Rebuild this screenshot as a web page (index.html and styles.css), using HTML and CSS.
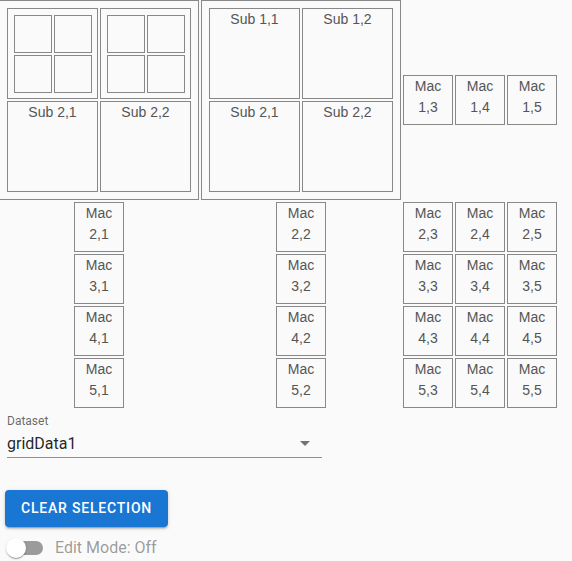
FILE: index.html
```html
<!DOCTYPE html>
<html lang="en">
<head>
    <meta charset="UTF-8">
    <meta name="viewport" content="width=device-width, initial-scale=1.0">
    <title>Grid Selection</title>
    <link rel="stylesheet" href="styles.css">
</head>
<body>
    <div class="matrix">
        <div class="big">
            <div class="sub split">
                <div class="mini"></div><div class="mini"></div>
                <div class="mini"></div><div class="mini"></div>
            </div>
            <div class="sub split">
                <div class="mini"></div><div class="mini"></div>
                <div class="mini"></div><div class="mini"></div>
            </div>
            <div class="sub">Sub 2,1</div>
            <div class="sub">Sub 2,2</div>
        </div>
        <div class="big">
            <div class="sub">Sub 1,1</div>
            <div class="sub">Sub 1,2</div>
            <div class="sub">Sub 2,1</div>
            <div class="sub">Sub 2,2</div>
        </div>
        <div class="mac">Mac<br>1,3</div>
        <div class="mac">Mac<br>1,4</div>
        <div class="mac">Mac<br>1,5</div>

        <div class="mac">Mac<br>2,1</div>
        <div class="mac">Mac<br>2,2</div>
        <div class="mac">Mac<br>2,3</div>
        <div class="mac">Mac<br>2,4</div>
        <div class="mac">Mac<br>2,5</div>

        <div class="mac">Mac<br>3,1</div>
        <div class="mac">Mac<br>3,2</div>
        <div class="mac">Mac<br>3,3</div>
        <div class="mac">Mac<br>3,4</div>
        <div class="mac">Mac<br>3,5</div>

        <div class="mac">Mac<br>4,1</div>
        <div class="mac">Mac<br>4,2</div>
        <div class="mac">Mac<br>4,3</div>
        <div class="mac">Mac<br>4,4</div>
        <div class="mac">Mac<br>4,5</div>

        <div class="mac">Mac<br>5,1</div>
        <div class="mac">Mac<br>5,2</div>
        <div class="mac">Mac<br>5,3</div>
        <div class="mac">Mac<br>5,4</div>
        <div class="mac">Mac<br>5,5</div>
    </div>

    <div class="field">
        <label class="field-label">Dataset</label>
        <div class="select">
            <span class="select-value">gridData1</span>
            <svg class="select-arrow" width="24" height="24" viewBox="0 0 24 24">
                <path d="M7 10l5 5 5-5z" fill="currentColor"/>
            </svg>
        </div>
    </div>

    <button class="clear-button">Clear Selection</button>

    <div class="switch-row">
        <span class="switch">
            <span class="switch-track"></span>
            <span class="switch-thumb"></span>
        </span>
        <span class="switch-label">Edit Mode: Off</span>
    </div>
</body>
</html>
```

FILE: styles.css
```css
* {
    margin: 0;
    padding: 0;
    box-sizing: border-box;
}

body {
    background: #fafafa;
    font-family: 'Roboto', 'Liberation Sans', sans-serif;
    overflow: hidden;
}

/* grid of machines */
.matrix {
    display: grid;
    grid-template-columns: repeat(5, auto);
    justify-content: start;
    place-items: center;
    margin: -1px 0 0 -2px;
    font-family: 'Liberation Sans', Arial, sans-serif;
    font-size: 14px;
    line-height: 21px;
    color: #555;
    text-align: center;
}

.big {
    width: 200px;
    height: 200px;
    margin: 1px;
    border: 1px solid #888;
    display: grid;
    grid-template-columns: repeat(2, auto);
    place-content: center;
}

.sub {
    width: 91px;
    height: 91px;
    margin: 1px;
    border: 1px solid #888;
}

.sub.split {
    display: grid;
    grid-template-columns: repeat(2, auto);
    place-content: center;
}

.mini {
    width: 38px;
    height: 38px;
    margin: 1px;
    border: 1px solid #888;
}

.mac {
    width: 50px;
    height: 50px;
    margin: 1px;
    border: 1px solid #888;
}

/* dataset select */
.field {
    width: 315px;
    margin: 6px 0 0 7px;
}

.field-label {
    display: block;
    font-size: 12px;
    line-height: 12px;
    color: rgba(0,0,0,0.6);
}

.select {
    display: flex;
    justify-content: space-between;
    align-items: flex-start;
    padding: 7px 5px 4px 0;
    border-bottom: 1px solid rgba(0,0,0,0.42);
    font-size: 16px;
    line-height: 19px;
    color: rgba(0,0,0,0.87);
}

.select-arrow {
    display: block;
    margin: -3px 0 -2px;
    color: rgba(0,0,0,0.54);
}

/* button */
.clear-button {
    display: block;
    margin: 32px 0 0 5px;
    padding: 6px 16px;
    border: none;
    border-radius: 4px;
    background: #1976d2;
    color: #fff;
    font-family: 'Roboto', sans-serif;
    font-size: 14px;
    font-weight: 500;
    line-height: 24.5px;
    letter-spacing: 0.8px;
    text-transform: uppercase;
    box-shadow: 0 3px 1px -2px rgba(0,0,0,0.2), 0 2px 2px 0 rgba(0,0,0,0.14), 0 1px 5px 0 rgba(0,0,0,0.12);
}

/* edit mode switch */
.switch-row {
    display: flex;
    align-items: center;
    margin: 2px 0 0 -3px;
}

.switch {
    position: relative;
    width: 58px;
    height: 38px;
    padding: 12px;
    flex-shrink: 0;
}

.switch-track {
    display: block;
    width: 34px;
    height: 14px;
    border-radius: 7px;
    background: #000;
    opacity: 0.38;
}

.switch-thumb {
    position: absolute;
    left: 9px;
    top: 9px;
    width: 20px;
    height: 20px;
    border-radius: 50%;
    background: #fff;
    box-shadow: 0 2px 1px -1px rgba(0,0,0,0.2), 0 1px 1px 0 rgba(0,0,0,0.14), 0 1px 3px 0 rgba(0,0,0,0.12);
}

.switch-label {
    font-size: 16px;
    line-height: 24px;
    color: rgba(0,0,0,0.4);
}
```
